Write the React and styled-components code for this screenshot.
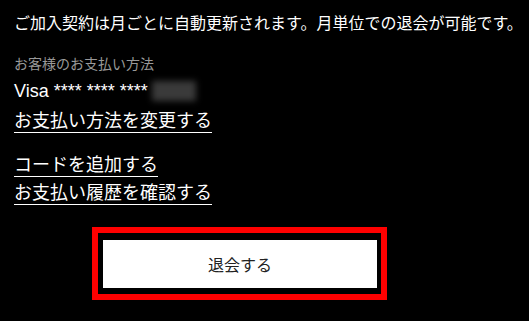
import React from 'react';
import styled, {createGlobalStyle} from 'styled-components';

const GlobalStyle = createGlobalStyle`
  html, body {
    margin: 0;
    padding: 0;
    background: #000;
  }
  body {
    font-family: "Liberation Sans", "Noto Sans CJK JP", sans-serif;
    color: #fff;
  }
`;

const Page = styled.div`
  width: 529px;
  height: 321px;
  box-sizing: border-box;
  padding: 12px 0 0 14px;
  display: flex;
  flex-direction: column;
  align-items: flex-start;
  overflow: hidden;
`;

const Notice = styled.p`
  margin: 0;
  font-size: 16px;
  line-height: 24px;
  white-space: nowrap;
`;

const Label = styled.div`
  margin-top: 18px;
  font-size: 14px;
  line-height: 20px;
  color: #999;
`;

const Card = styled.div`
  margin-top: 4px;
  font-size: 18px;
  line-height: 26px;
  display: flex;
  align-items: center;
`;

const Masked = styled.span`
  display: inline-block;
  width: 44px;
  height: 20px;
  margin-left: 4px;
  background: #3a3a3a;
  filter: blur(3px);
`;

const LinkGroup = styled.div`
  margin-top: ${props => props.gap}px;
  display: flex;
  flex-direction: column;
  align-items: flex-start;
  gap: 5px;
`;

const TextLink = styled.a`
  display: inline-block;
  color: #fff;
  text-decoration: none;
  font-size: 18px;
  line-height: 22px;
  border-bottom: 1px solid #fff;
  cursor: pointer;
`;

const Highlight = styled.div`
  margin: 22px 0 0 78px;
  border: 6px solid #ff0000;
  padding: 7px 4px 6px 5px;
`;

const CancelButton = styled.button`
  display: block;
  width: 274px;
  height: 48px;
  border: none;
  background: #fff;
  color: #222;
  font-family: "Liberation Sans", "Noto Sans CJK JP", sans-serif;
  font-size: 16px;
  cursor: pointer;
`;

const App = () => {
  return (
    <>
      <GlobalStyle />
      <Page>
        <Notice>ご加入契約は月ごとに自動更新されます。月単位での退会が可能です。</Notice>
        <Label>お客様のお支払い方法</Label>
        <Card>
          Visa **** **** ****<Masked />
        </Card>
        <LinkGroup gap={6}>
          <TextLink>お支払い方法を変更する</TextLink>
        </LinkGroup>
        <LinkGroup gap={21}>
          <TextLink>コードを追加する</TextLink>
          <TextLink>お支払い履歴を確認する</TextLink>
        </LinkGroup>
        <Highlight>
          <CancelButton>退会する</CancelButton>
        </Highlight>
      </Page>
    </>
  );
};

export default App;
